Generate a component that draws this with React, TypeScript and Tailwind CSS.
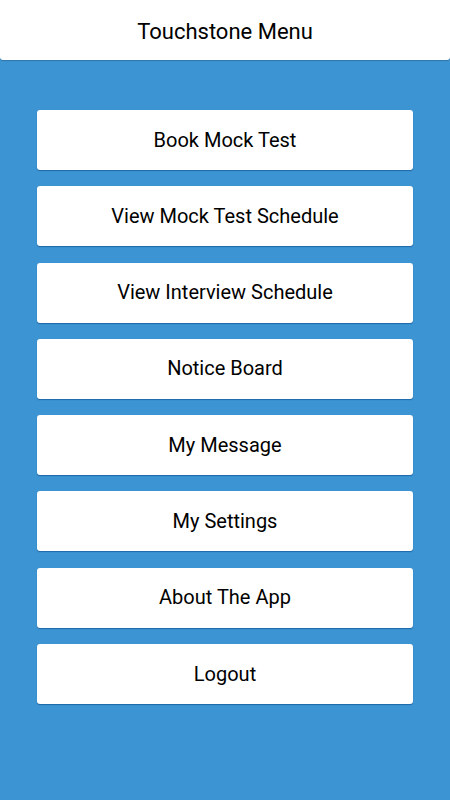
export default function App() {
  const items = [
    "Book Mock Test",
    "View Mock Test Schedule",
    "View Interview Schedule",
    "Notice Board",
    "My Message",
    "My Settings",
    "About The App",
    "Logout",
  ];
  return (
    <div className="w-[450px] h-[800px] bg-[#3c94d3] flex flex-col" style={{ fontFamily: "Roboto, sans-serif" }}>
      <div className="h-[60px] bg-white rounded-b-[3px] shadow-[0_1px_1px_rgba(0,0,0,0.2)] flex items-center justify-center pt-[2px] text-[22px] text-black">
        Touchstone Menu
      </div>
      <div className="flex flex-col gap-[16.3px] px-[37px] pt-[50px]">
        {items.map((t) => (
          <div
            key={t}
            className="h-[60px] bg-white rounded-[3px] shadow-[0_1px_1px_rgba(0,60,120,0.5)] flex items-center justify-center text-[20px] text-black pb-[1px]"
          >
            {t}
          </div>
        ))}
      </div>
    </div>
  );
}
